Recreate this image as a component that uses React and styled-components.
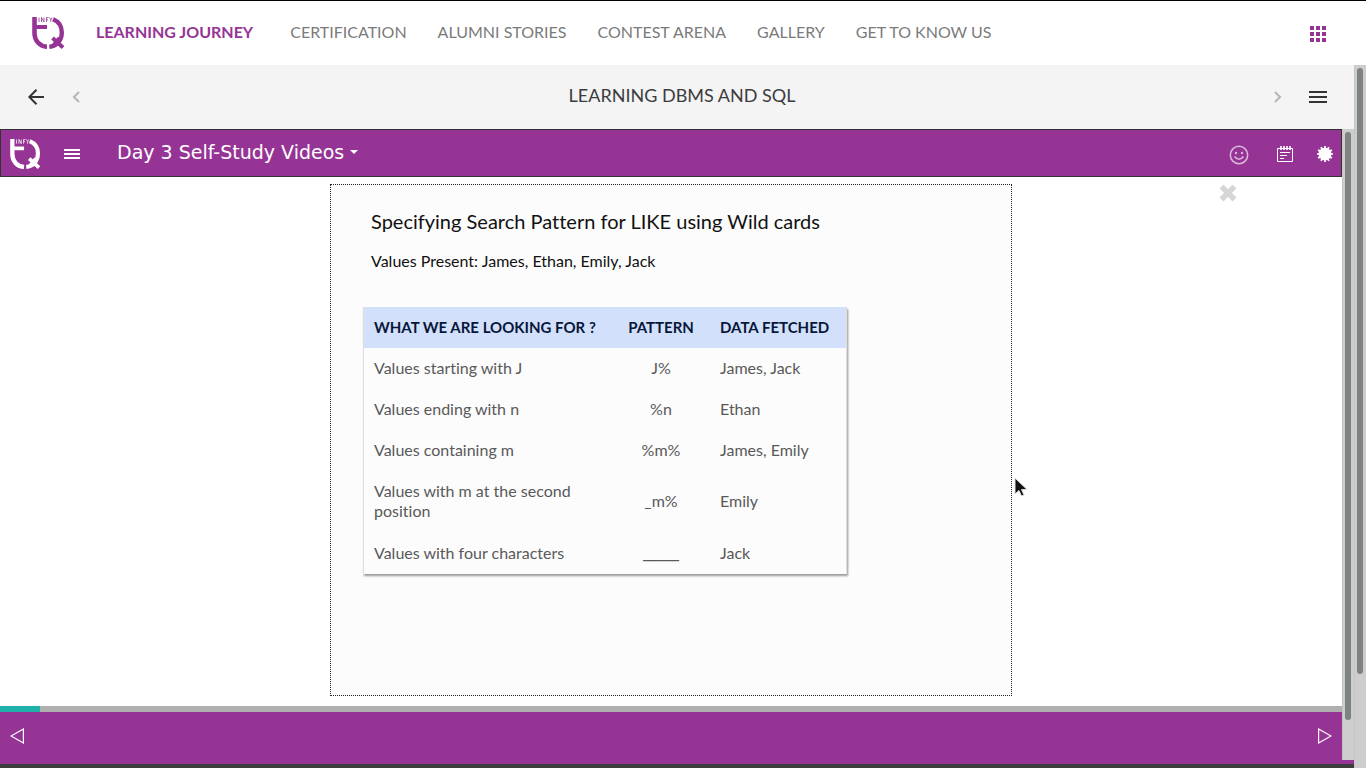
import React from "react";
import styled, { createGlobalStyle } from "styled-components";

const purple = "#963495";
const brandFont = '"Lato", "Open Sans", sans-serif';

const GlobalStyle = createGlobalStyle`
  *, *::before, *::after { box-sizing: border-box; }
  html, body, #root { height: 100%; margin: 0; }
  body { background: #fff; font-family: ${brandFont}; font-variant-ligatures: none; overflow: hidden; }
  button { font: inherit; color: inherit; background: none; border: 0; padding: 0; margin: 0; cursor: pointer; }
  h1, h2, p { margin: 0; }
`;

const Page = styled.div`
  display: flex;
  flex-direction: column;
  height: 100vh;
`;

const SiteHeader = styled.header`
  display: flex;
  align-items: center;
  flex: 0 0 65px;
  border-top: 1px solid #000;
  padding: 0 40px 0 32px;
  background: #fff;
`;

const Nav = styled.nav`
  display: flex;
  flex: 1;
  gap: 31px;
  margin-left: 32px;
  padding-bottom: 2px;
`;

const NavLink = styled.a`
  padding-right: ${(p) => (p.$active ? 6 : 0)}px;
  font-size: 16px;
  line-height: 24px;
  white-space: nowrap;
  text-decoration: none;
  color: ${(p) => (p.$active ? purple : "#7b7b7b")};
  font-weight: ${(p) => (p.$active ? 700 : 400)};
`;

const IconButton = styled.button`
  display: flex;
  align-items: center;
  justify-content: center;
  width: ${(p) => p.$w || 24}px;
  height: 24px;
  color: ${(p) => p.$color || "inherit"};
`;

const Scroller = styled.div`
  display: flex;
  flex: 1;
  min-height: 0;
`;

const Column = styled.div`
  display: flex;
  flex-direction: column;
  flex: 1;
  min-width: 0;
`;

const ScrollTrack = styled.div`
  flex: 0 0 12px;
  padding: 3px;
  background: #cdcdcd;
  box-shadow: inset 1px 0 0 #c9c5bf;
`;

const ScrollThumb = styled.div`
  height: ${(p) => p.$size};
  border-radius: 3px;
  background: #7d8283;
`;

const CourseBar = styled.div`
  display: flex;
  align-items: center;
  flex: 0 0 64px;
  padding: 0 24px;
  background: #f4f4f4;
`;

const CourseTitle = styled.h1`
  flex: 1;
  padding: 0 0 4px 10px;
  text-align: center;
  font-size: 18px;
  font-weight: 400;
  line-height: 24px;
  color: #3c3c3e;
`;

const Group = styled.div`
  display: flex;
  align-items: center;
  gap: 16px;
`;

const Player = styled.section`
  display: flex;
  flex: 1;
  min-height: 0;
`;

const PlayerBar = styled.div`
  display: flex;
  align-items: center;
  flex: 0 0 48px;
  border: 1px solid #333;
  padding: 2px 4px 0 9px;
  background: ${purple};
  color: #fff;
`;

const TopicButton = styled.button`
  display: flex;
  align-items: center;
  gap: 6px;
  margin-left: 13px;
  font-family: "DejaVu Sans", sans-serif;
  font-size: 19px;
  line-height: 24px;
  padding-bottom: 4px;
`;

const Tools = styled.div`
  display: flex;
  align-items: center;
  gap: 16px;
  margin-left: auto;
`;

const Feedback = styled(IconButton)`
  margin-right: 6px;
`;

const Stage = styled.main`
  position: relative;
  display: flex;
  justify-content: center;
  flex: 1;
  min-height: 0;
  padding: 7px 0 10px;
  background: #fff;
`;

const CloseButton = styled.button`
  position: absolute;
  top: 7px;
  right: 105px;
  display: flex;
`;

const Slide = styled.article`
  width: 682px;
  border: 1px dotted #222;
  padding: 22px 32px;
  background: #fcfcfc;
`;

const SlideTitle = styled.h2`
  padding-left: 8px;
  font-size: 20px;
  font-weight: 400;
  line-height: 28px;
  color: #111;
`;

const SlideText = styled.p`
  margin-top: 12px;
  padding-left: 8px;
  font-size: 16px;
  line-height: 28px;
  color: #111;
`;

const Table = styled.table`
  width: 484px;
  margin-top: 32px;
  border-collapse: separate;
  border-spacing: 0;
  table-layout: fixed;
  border: solid #dedede;
  border-width: 0 1px;
  box-shadow: 1px 2px 2px #999;
  font-size: 16px;
  line-height: 20px;
  color: #595959;
`;

const Head = styled.th`
  width: ${(p) => p.$w};
  padding: 10px 10px 11px;
  background: #d3e0fb;
  color: #07173a;
  font-size: 15px;
  font-weight: 700;
  text-align: ${(p) => p.$align || "left"};
  white-space: nowrap;
`;

const Cell = styled.td`
  padding: 10px 10px 11px;
  text-align: ${(p) => p.$align || "left"};
  vertical-align: middle;
`;

const Underscores = styled.span`
  font-family: "Liberation Sans", sans-serif;
`;

const Progress = styled.div`
  flex: 0 0 6px;
  background: #b1b0b1;
`;

const ProgressFill = styled.div`
  width: 3%;
  height: 6px;
  background: #20b2aa;
`;

const PlayerFooter = styled.footer`
  display: flex;
  align-items: center;
  justify-content: space-between;
  flex: 0 0 48px;
  padding: 0 5px;
  background: ${purple};
  color: #fff;
`;

const BottomEdge = styled.div`
  flex: 0 0 8px;
  border-top: 4px solid ${purple};
  background: #3d3d3d;
`;

const Cursor = styled.svg`
  position: absolute;
  left: calc(50% + 343px);
  top: 300px;
`;

const Logo = ({ size }) => (
  <svg width={size} height={size} viewBox="0 0 32 32" fill="none" stroke="currentColor" aria-label="InfyTQ">
    <path d="M2.500 0V16C2.500 24 8 29.500 15 29.800" strokeWidth="4.600" />
    <path d="M2 10H15" strokeWidth="4" />
    <path d="M21 2.300C26.500 4.500 29.800 9.500 29.800 15.500C29.800 23.500 24.500 29.300 17.300 29.800" strokeWidth="4.400" />
    <path d="M20.500 21L31 30.500M21.500 28.500L27.500 21" strokeWidth="4" />
    <path d="M7 .5V5M9.500 5V.5L12 5V.5M14.500 5V.5H16.500M14.500 2.800H16M17.500 .5L18.800 2.800L20 .5M18.800 2.800V5" strokeWidth=".8" />
  </svg>
);

const Bars = ({ w, h, s }) => (
  <svg width={w} height={h} viewBox={`0 0 ${w} ${h}`} stroke="currentColor" strokeWidth="2">
    <path d={`M0 1H${w}M0 ${1 + s}H${w}M0 ${1 + s * 2}H${w}`} />
  </svg>
);

const links = ["LEARNING JOURNEY", "CERTIFICATION", "ALUMNI STORIES", "CONTEST ARENA", "GALLERY", "GET TO KNOW US"];

const rows = [
  ["Values starting with J", "J%", "James, Jack"],
  ["Values ending with n", "%n", "Ethan"],
  ["Values containing m", "%m%", "James, Emily"],
  ["Values with m at the second position", "_m%", "Emily"],
  ["Values with four characters", <Underscores key="u">____</Underscores>, "Jack"],
];

const spokes = Array.from({ length: 12 }, (_, i) => i * 30);

export default function App() {
  return (
    <Page>
      <GlobalStyle />
      <SiteHeader>
        <IconButton as="a" href="#home" $w={32} $color={purple}><Logo size={32} /></IconButton>
        <Nav>
          {links.map((l, i) => (
            <NavLink key={l} href="#" $active={i === 0}>{l}</NavLink>
          ))}
        </Nav>
        <IconButton $w={16} $color={purple} aria-label="Apps">
          <svg width="16" height="18" viewBox="0 -2 16 18" fill="currentColor">
            <path d="M0 0h4v4H0zM6 0h4v4H6zM12 0h4v4h-4zM0 6h4v4H0zM6 6h4v4H6zM12 6h4v4h-4zM0 12h4v4H0zM6 12h4v4H6zM12 12h4v4h-4z" />
          </svg>
        </IconButton>
      </SiteHeader>
      <Scroller>
        <Column>
          <CourseBar>
            <Group>
              <IconButton $color="#333" aria-label="Back">
                <svg width="16" height="16" viewBox="0 0 16 16" fill="none" stroke="currentColor" strokeWidth="2"><path d="M16 8H2M8.500 .8L1.300 8L8.500 15.200" /></svg>
              </IconButton>
              <IconButton $color="#b5b5b5" aria-label="Previous">
                <svg width="8" height="12" viewBox="0 0 8 12" fill="none" stroke="currentColor" strokeWidth="2"><path d="M7 1L2 6L7 11" /></svg>
              </IconButton>
            </Group>
            <CourseTitle>LEARNING DBMS AND SQL</CourseTitle>
            <Group>
              <IconButton $color="#b5b5b5" aria-label="Next">
                <svg width="8" height="12" viewBox="0 0 8 12" fill="none" stroke="currentColor" strokeWidth="2"><path d="M1 1L6 6L1 11" /></svg>
              </IconButton>
              <IconButton $color="#333" aria-label="Course menu"><Bars w={18} h={12} s={5} /></IconButton>
            </Group>
          </CourseBar>
          <Player>
            <Column>
              <PlayerBar>
                <Logo size={30} />
                <IconButton $w={64} aria-label="Contents"><Bars w={16} h={10} s={4} /></IconButton>
                <TopicButton>
                  Day 3 Self-Study Videos
                  <svg width="8" height="4" viewBox="0 0 8 4" fill="currentColor"><path d="M0 0H8L4 4Z" /></svg>
                </TopicButton>
                <Tools>
                  <Feedback aria-label="Feedback">
                    <svg width="20" height="22" viewBox="0 -2 20 22" fill="none" stroke="#dcb9dc" strokeWidth="1.500">
                      <circle cx="10" cy="10" r="8.700" /><path d="M5.500 11.500Q10 17 14.500 11.500" />
                      <circle cx="7" cy="8" r="1.200" fill="#dcb9dc" stroke="none" /><circle cx="13" cy="8" r="1.200" fill="#dcb9dc" stroke="none" />
                    </svg>
                  </Feedback>
                  <IconButton aria-label="Notes">
                    <svg width="16" height="16" viewBox="0 0 16 16" fill="none" stroke="currentColor">
                      <path d="M.5 2.500h15v13H.5zM3 6.500h10M3 9.500h7M3 12.500h4" /><path d="M4 0v4M7 0v4M10 0v4M13 0v4" strokeWidth="1.600" />
                    </svg>
                  </IconButton>
                  <IconButton aria-label="Settings">
                    <svg width="16" height="16" viewBox="0 0 16 16" fill="currentColor">
                      <circle cx="8" cy="8" r="6.300" />
                      {spokes.map((a) => <path key={a} d="M6.900 3L7.200 0H8.800L9.100 3Z" transform={`rotate(${a} 8 8)`} />)}
                    </svg>
                  </IconButton>
                </Tools>
              </PlayerBar>
              <Stage>
                <Slide>
                  <SlideTitle>Specifying Search Pattern for LIKE using Wild cards</SlideTitle>
                  <SlideText>Values Present: James, Ethan, Emily, Jack</SlideText>
                  <Table>
                    <thead>
                      <tr>
                        <Head $w="248px">WHAT WE ARE LOOKING FOR ?</Head>
                        <Head $w="98px" $align="center">PATTERN</Head>
                        <Head>DATA FETCHED</Head>
                      </tr>
                    </thead>
                    <tbody>
                      {rows.map(([a, b, c]) => (
                        <tr key={a}><Cell>{a}</Cell><Cell $align="center">{b}</Cell><Cell>{c}</Cell></tr>
                      ))}
                    </tbody>
                  </Table>
                </Slide>
                <CloseButton aria-label="Close">
                  <svg width="18" height="18" viewBox="0 0 18 18" stroke="#d6d6d6" strokeWidth="5.500"><path d="M2.500 2.500L15.500 15.500M15.500 2.500L2.500 15.500" /></svg>
                </CloseButton>
                <Cursor width="14" height="20" viewBox="0 0 14 20"><path d="M1 1V17L5 13.500L7.500 19L10 18L7.500 12.500H13Z" fill="#111" stroke="#ddd" /></Cursor>
              </Stage>
              <Progress><ProgressFill /></Progress>
              <PlayerFooter>
                <IconButton aria-label="Previous slide"><svg width="14" height="16" viewBox="0 0 14 16" fill="none" stroke="currentColor" strokeWidth="1.200"><path d="M13.400 1V15L1 8Z" /></svg></IconButton>
                <IconButton aria-label="Next slide"><svg width="14" height="16" viewBox="0 0 14 16" fill="none" stroke="currentColor" strokeWidth="1.200"><path d="M.6 1V15L13 8Z" /></svg></IconButton>
              </PlayerFooter>
            </Column>
            <ScrollTrack><ScrollThumb $size="94%" /></ScrollTrack>
          </Player>
          <BottomEdge />
        </Column>
        <ScrollTrack><ScrollThumb $size="87%" /></ScrollTrack>
      </Scroller>
    </Page>
  );
}
